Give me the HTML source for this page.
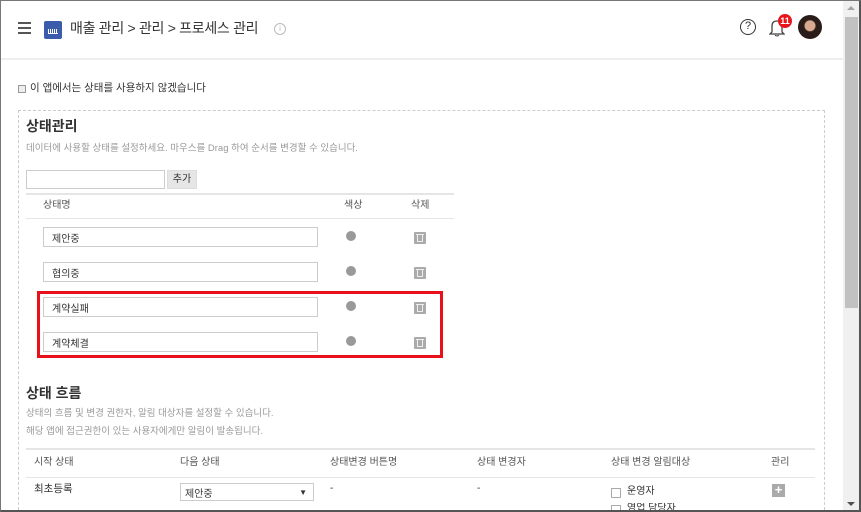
<!DOCTYPE html>
<html style="width:861px;height:512px;overflow:hidden"><head><meta charset="utf-8"><style>
*{margin:0;padding:0;box-sizing:border-box}
body{width:861px;height:512px;overflow:hidden;background:#fff;font-family:"Liberation Sans","Noto Sans CJK KR",sans-serif;color:#333;position:relative}
.a{position:absolute;white-space:nowrap;line-height:1.2}
.frame{position:absolute;left:0;top:0;width:861px;height:512px;border:1px solid #777;border-right:2px solid #555;border-bottom:2px solid #555;pointer-events:none}
.inp{position:absolute;border:1px solid #ccc;background:#fff;font-size:10px;padding-left:8px;color:#333;display:flex;align-items:center}
.dot{position:absolute;width:10px;height:10px;border-radius:50%;background:#999}
.tr{position:absolute;width:12px;height:12px;background:#aaa;border-radius:1px}
.tr:after{content:"";position:absolute;left:3px;top:3px;width:4px;height:6px;border:1px solid #eee;border-top:none}
.tr:before{content:"";position:absolute;left:2px;top:2px;width:8px;height:1px;background:#eee}
.h{font-size:10px;color:#555}
</style></head><body>
<div class="a" style="left:18px;top:22px;width:13px;height:2px;background:#555;box-shadow:0 5px 0 #555,0 10px 0 #555"></div>
<div class="a" style="left:44px;top:21px;width:18px;height:18px;background:#3b5bab;border-radius:2px"></div>
<div class="a" style="left:48px;top:29px;width:10px;height:5px;border-bottom:1px solid #fff;background:repeating-linear-gradient(90deg,#fff 0 1px,transparent 1px 2px)"></div>
<div class="a" style="left:70px;top:20px;font-size:14px;color:#333;letter-spacing:-0.3px">매출 관리 &gt; 관리 &gt; 프로세스 관리</div>
<div class="a" style="left:274px;top:23px;width:12px;height:12px;border:1px solid #bbb;border-radius:50%;font-size:8px;color:#bbb;text-align:center;line-height:10px">i</div>
<div class="a" style="left:740px;top:19px;width:16px;height:16px;border:1.5px solid #333;border-radius:50%;font-size:11px;text-align:center;line-height:13px;color:#333">?</div>
<svg class="a" style="left:769px;top:18px" width="16" height="20" viewBox="0 0 16 20"><path d="M3 14 L3 8 Q3 3 8 3 Q13 3 13 8 L13 14 L15 16 L1 16 Z" fill="none" stroke="#444" stroke-width="1.3"/><path d="M6 17 Q8 19 10 17" fill="none" stroke="#444"/></svg>
<div class="a" style="left:778px;top:14px;width:14px;height:14px;background:#e8151b;border-radius:50%;color:#fff;font-size:9px;font-weight:bold;text-align:center;line-height:14px">11</div>
<div class="a" style="left:798px;top:15px;width:24px;height:24px;border-radius:50%;background:radial-gradient(circle at 50% 45%,#d9a98f 0 5px,#2a1c18 6px)"></div>
<div class="a" style="left:1px;top:58px;width:842px;height:2px;background:#eee"></div>
<div class="a" style="left:18px;top:85px;width:8px;height:8px;border:1px solid #999;background:#eee"></div>
<div class="a" style="left:30px;top:82px;font-size:10.5px;color:#333">이 앱에서는 상태를 사용하지 않겠습니다</div>
<div class="a" style="left:18px;top:110px;width:807px;height:410px;border:1px dashed #ccc"></div>
<div class="a" style="left:26px;top:118px;font-size:14px;font-weight:bold;color:#333">상태관리</div>
<div class="a" style="left:26px;top:143px;font-size:9.5px;color:#999">데이터에 사용할 상태를 설정하세요. 마우스를 Drag 하여 순서를 변경할 수 있습니다.</div>
<div class="inp" style="left:26px;top:170px;width:139px;height:19px"></div>
<div class="a" style="left:167px;top:170px;width:30px;height:19px;background:#e6e6e6;border:1px solid #ddd;font-size:10px;text-align:center;line-height:17px">추가</div>
<div class="a" style="left:26px;top:193px;width:428px;height:2px;background:#e5e5e5"></div>
<div class="a h" style="left:43px;top:200px">상태명</div>
<div class="a h" style="left:344px;top:200px">색상</div>
<div class="a h" style="left:411px;top:200px">삭제</div>
<div class="a" style="left:26px;top:218px;width:428px;height:1px;background:#e5e5e5"></div>
<div class="inp" style="left:43px;top:227px;width:275px;height:20px">제안중</div>
<div class="inp" style="left:43px;top:262px;width:275px;height:20px">협의중</div>
<div class="inp" style="left:43px;top:297px;width:275px;height:20px">계약실패</div>
<div class="inp" style="left:43px;top:332px;width:275px;height:20px">계약체결</div>
<div class="dot" style="left:346px;top:231px"></div><div class="dot" style="left:346px;top:266px"></div><div class="dot" style="left:346px;top:301px"></div><div class="dot" style="left:346px;top:336px"></div>
<div class="tr" style="left:414px;top:232px"></div><div class="tr" style="left:414px;top:267px"></div><div class="tr" style="left:414px;top:302px"></div><div class="tr" style="left:414px;top:337px"></div>
<div class="a" style="left:37px;top:291px;width:406px;height:67px;border:3px solid #e8101a"></div>
<div class="a" style="left:26px;top:385px;font-size:14px;font-weight:bold;color:#333">상태 흐름</div>
<div class="a" style="left:26px;top:408px;font-size:9.5px;color:#999">상태의 흐름 및 변경 권한자, 알림 대상자를 설정할 수 있습니다.</div>
<div class="a" style="left:26px;top:426px;font-size:9.5px;color:#999">해당 앱에 접근권한이 있는 사용자에게만 알림이 발송됩니다.</div>
<div class="a" style="left:26px;top:448px;width:789px;height:2px;background:#e5e5e5"></div>
<div class="a h" style="left:34px;top:457px">시작 상태</div>
<div class="a h" style="left:180px;top:457px">다음 상태</div>
<div class="a h" style="left:330px;top:457px">상태변경 버튼명</div>
<div class="a h" style="left:477px;top:457px">상태 변경자</div>
<div class="a h" style="left:611px;top:457px">상태 변경 알림대상</div>
<div class="a h" style="left:771px;top:457px">관리</div>
<div class="a" style="left:26px;top:477px;width:789px;height:1px;background:#e5e5e5"></div>
<div class="a" style="left:34px;top:483px;font-size:10.5px;color:#333">최초등록</div>
<div class="inp" style="left:180px;top:483px;width:134px;height:18px;padding-left:4px">제안중<span style="position:absolute;right:6px;font-size:8px">▼</span></div>
<div class="a" style="left:330px;top:483px;font-size:10px">-</div>
<div class="a" style="left:477px;top:483px;font-size:10px">-</div>
<div class="a" style="left:611px;top:488px;width:10px;height:10px;border:1px solid #aaa"></div>
<div class="a" style="left:627px;top:486px;font-size:10px">운영자</div>
<div class="a" style="left:611px;top:505px;width:10px;height:6px;border:1px solid #aaa;border-bottom:none"></div>
<div class="a" style="left:627px;top:503px;font-size:10px;height:8px;overflow:hidden">영업 담당자</div>
<div class="a" style="left:772px;top:484px;width:13px;height:13px;background:#aaa;color:#fff;font-size:13px;line-height:12px;text-align:center;font-weight:bold">+</div>
<div class="a" style="left:843px;top:0;width:17px;height:512px;background:#f0f0f0"></div>
<div class="a" style="left:845px;top:17px;width:13px;height:291px;background:#c1c1c1"></div>
<div class="a" style="left:847px;top:6px;width:0;height:0;border-left:4px solid transparent;border-right:4px solid transparent;border-bottom:4px solid #a3a3a3"></div>
<div class="a" style="left:847px;top:502px;width:0;height:0;border-left:4px solid transparent;border-right:4px solid transparent;border-top:4px solid #505050"></div>
<div class="frame"></div>
</body></html>
